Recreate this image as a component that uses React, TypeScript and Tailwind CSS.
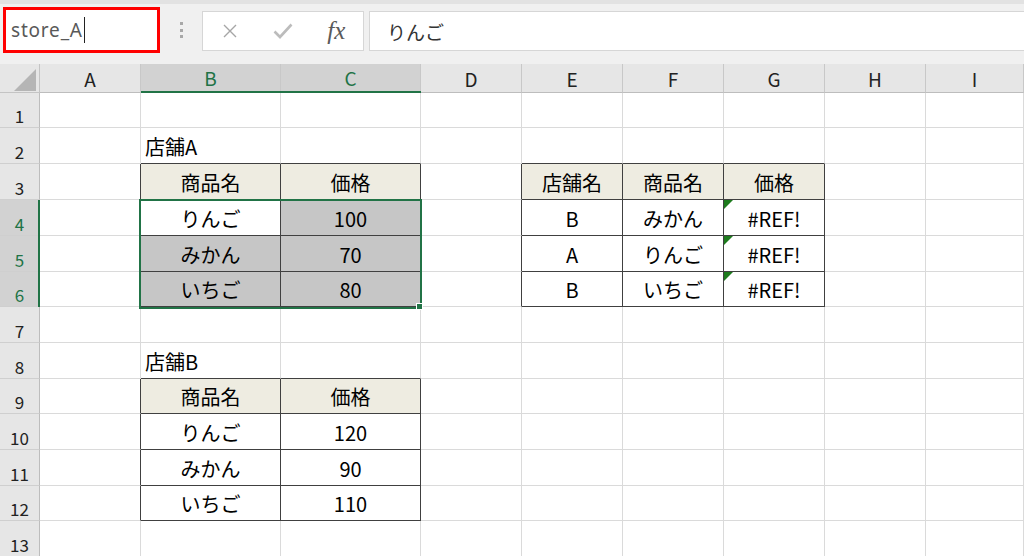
import React from 'react';

const COLS = ['A', 'B', 'C', 'D', 'E', 'F', 'G', 'H', 'I'];
// row heights include the bottom gridline
const ROW_H = ['h-[35px]', 'h-[36px]', 'h-[36px]', 'h-[36px]', 'h-[36px]', 'h-[35px]', 'h-[36px]', 'h-[36px]', 'h-[35px]', 'h-[36px]', 'h-[36px]', 'h-[35px]', 'h-[36px]'];

type Cell = { t: string; left?: boolean };

const DATA: Record<string, Cell> = {
  '1-2': { t: '店舗A', left: true },
  '1-3': { t: '商品名' },
  '2-3': { t: '価格' },
  '4-3': { t: '店舗名' },
  '5-3': { t: '商品名' },
  '6-3': { t: '価格' },
  '1-4': { t: 'りんご' },
  '2-4': { t: '100' },
  '4-4': { t: 'B' },
  '5-4': { t: 'みかん' },
  '6-4': { t: '#REF!' },
  '1-5': { t: 'みかん' },
  '2-5': { t: '70' },
  '4-5': { t: 'A' },
  '5-5': { t: 'りんご' },
  '6-5': { t: '#REF!' },
  '1-6': { t: 'いちご' },
  '2-6': { t: '80' },
  '4-6': { t: 'B' },
  '5-6': { t: 'いちご' },
  '6-6': { t: '#REF!' },
  '1-8': { t: '店舗B', left: true },
  '1-9': { t: '商品名' },
  '2-9': { t: '価格' },
  '1-10': { t: 'りんご' },
  '2-10': { t: '120' },
  '1-11': { t: 'みかん' },
  '2-11': { t: '90' },
  '1-12': { t: 'いちご' },
  '2-12': { t: '110' },
};

function inTable(c: number, r: number) {
  if ((c === 1 || c === 2) && ((r >= 3 && r <= 6) || (r >= 9 && r <= 12))) return true;
  if (c >= 4 && c <= 6 && r >= 3 && r <= 6) return true;
  return false;
}

function colWidth(c: number) {
  if (c === 1 || c === 2) return 'w-[140px]';
  if (c === 8) return 'flex-1';
  return 'w-[101px]';
}

const isSelCol = (c: number) => c === 1 || c === 2;
const isSelRow = (r: number) => r >= 4 && r <= 6;

function TopBar() {
  return (
    <div className="flex items-start h-[64px] bg-[#f0f0f0] border-t-[4px] border-[#e2e2e2]">
      <div className="ml-[3px] mt-[3px] w-[157px] h-[46px] border-[3px] border-[#ff0000] bg-white flex items-center pl-[5px]">
        <span className="text-[19px] tracking-[0.8px] text-[#595959] leading-none" style={{ fontFamily: '"Noto Sans", sans-serif' }}>
          store_A
        </span>
        <span className="ml-[1px] w-[1px] h-[26px] bg-[#222]" />
      </div>
      <div className="w-[42px] h-[46px] mt-[3px] flex flex-col items-center justify-center gap-[3.5px]">
        <span className="w-[3px] h-[3px] bg-[#a8a8a8]" />
        <span className="w-[3px] h-[3px] bg-[#a8a8a8]" />
        <span className="w-[3px] h-[3px] bg-[#a8a8a8]" />
      </div>
      <div className="mt-[7px] w-[162px] h-[40px] bg-white border border-[#d6d6d6] flex items-center">
        <div className="w-[54px] flex justify-center">
          <svg width="16" height="16" viewBox="0 0 16 16">
            <path d="M2 2 L14 14 M14 2 L2 14" stroke="#a6a6a6" strokeWidth="1.4" fill="none" />
          </svg>
        </div>
        <div className="w-[54px] flex justify-center">
          <svg width="20" height="16" viewBox="0 0 20 16">
            <path d="M1.5 8.5 L7 14 L18.5 1.5" stroke="#bcbcbc" strokeWidth="2.6" fill="none" />
          </svg>
        </div>
        <div className="w-[54px] flex justify-center">
          <span className="italic text-[25px] leading-none text-[#5a5a5a] -mt-[2px]" style={{ fontFamily: '"Liberation Serif", serif' }}>
            fx
          </span>
        </div>
      </div>
      <div className="mt-[7px] ml-[5px] flex-1 h-[40px] bg-white border border-r-0 border-[#d6d6d6] flex items-center pl-[17px]">
        <span className="text-[19px] text-[#333] leading-none" style={{ fontFamily: '"Noto Sans CJK JP", sans-serif' }}>
          りんご
        </span>
      </div>
    </div>
  );
}

function ColumnHeader() {
  return (
    <div className="flex h-[29px] bg-[#e6e6e6]">
      <div className="w-[40px] border-r border-b border-[#c4c4c4] flex items-end justify-end pr-[3px] pb-[1px]">
        <svg width="22" height="22" viewBox="0 0 22 22">
          <path d="M22 0 L22 22 L0 22 Z" fill="#b5b5b5" />
        </svg>
      </div>
      {COLS.map((name, c) => (
        <div
          key={name}
          className={`${colWidth(c)} flex items-end justify-center pb-[4px] text-[19px] leading-none border-r border-[#c8c8c8] ${
            isSelCol(c) ? 'bg-[#d2d2d2] text-[#217346] border-b-2 border-b-[#217346]' : 'text-[#222] border-b border-b-[#bdbdbd]'
          }`}
        >
          {name}
        </div>
      ))}
    </div>
  );
}

function Row({ r }: { r: number }) {
  const h = ROW_H[r - 1];
  return (
    <div className={`flex ${h}`}>
      <div
        className={`w-[40px] flex items-end justify-center pb-[3px] text-[17px] leading-none border-b border-b-[#cfcfcf] border-r border-r-[#bdbdbd] ${
          isSelRow(r) ? 'bg-[#d2d2d2] text-[#217346]' : 'bg-[#e6e6e6] text-[#222]'
        }`}
      >
        {r}
      </div>
      {COLS.map((name, c) => {
        const cell = DATA[`${c}-${r}`];
        const darkR = inTable(c, r) || inTable(c + 1, r);
        const darkB = inTable(c, r) || inTable(c, r + 1);
        const head = inTable(c, r) && (r === 3 || r === 9);
        const sel = isSelCol(c) && isSelRow(r) && !(c === 1 && r === 4);
        const bg = head ? 'bg-[#eeece1]' : sel ? 'bg-[#c6c6c6]' : 'bg-white';
        return (
          <div
            key={name}
            className={`${colWidth(c)} ${bg} flex items-end pb-[6px] text-[20px] leading-none text-black border-r border-b ${
              darkR ? 'border-r-[#404040]' : 'border-r-[#dadada]'
            } ${darkB ? 'border-b-[#404040]' : 'border-b-[#dadada]'} ${cell?.left ? 'justify-start pl-[4px]' : 'justify-center'}`}
          >
            {cell?.t}
          </div>
        );
      })}
    </div>
  );
}

export default function App() {
  return (
    <div
      className="relative w-[1024px] h-[556px] overflow-hidden bg-white select-none"
      style={{ fontFamily: '"Noto Sans CJK JP", "Noto Sans", sans-serif' }}
    >
      <TopBar />
      <ColumnHeader />
      {ROW_H.map((_, i) => (
        <Row key={i} r={i + 1} />
      ))}

      {/* selection overlays */}
      <div className="absolute left-[141px] top-[91px] w-[280px] h-[2px] bg-[#217346]" />
      <div className="absolute left-[38px] top-[200px] w-[2px] h-[107px] bg-[#217346]" />
      <div className="absolute left-[139px] top-[199px] w-[283px] h-[110px] border-2 border-[#217346]" />
      <div className="absolute left-[416px] top-[303px] w-[7px] h-[7px] bg-[#217346] border border-white" />

      {/* error indicators */}
      {[200, 236, 272].map((y) => (
        <svg key={y} className="absolute left-[724px]" style={{ top: y }} width="9" height="9" viewBox="0 0 9 9">
          <path d="M0 0 L9 0 L0 9 Z" fill="#1d7b1d" />
        </svg>
      ))}
    </div>
  );
}
